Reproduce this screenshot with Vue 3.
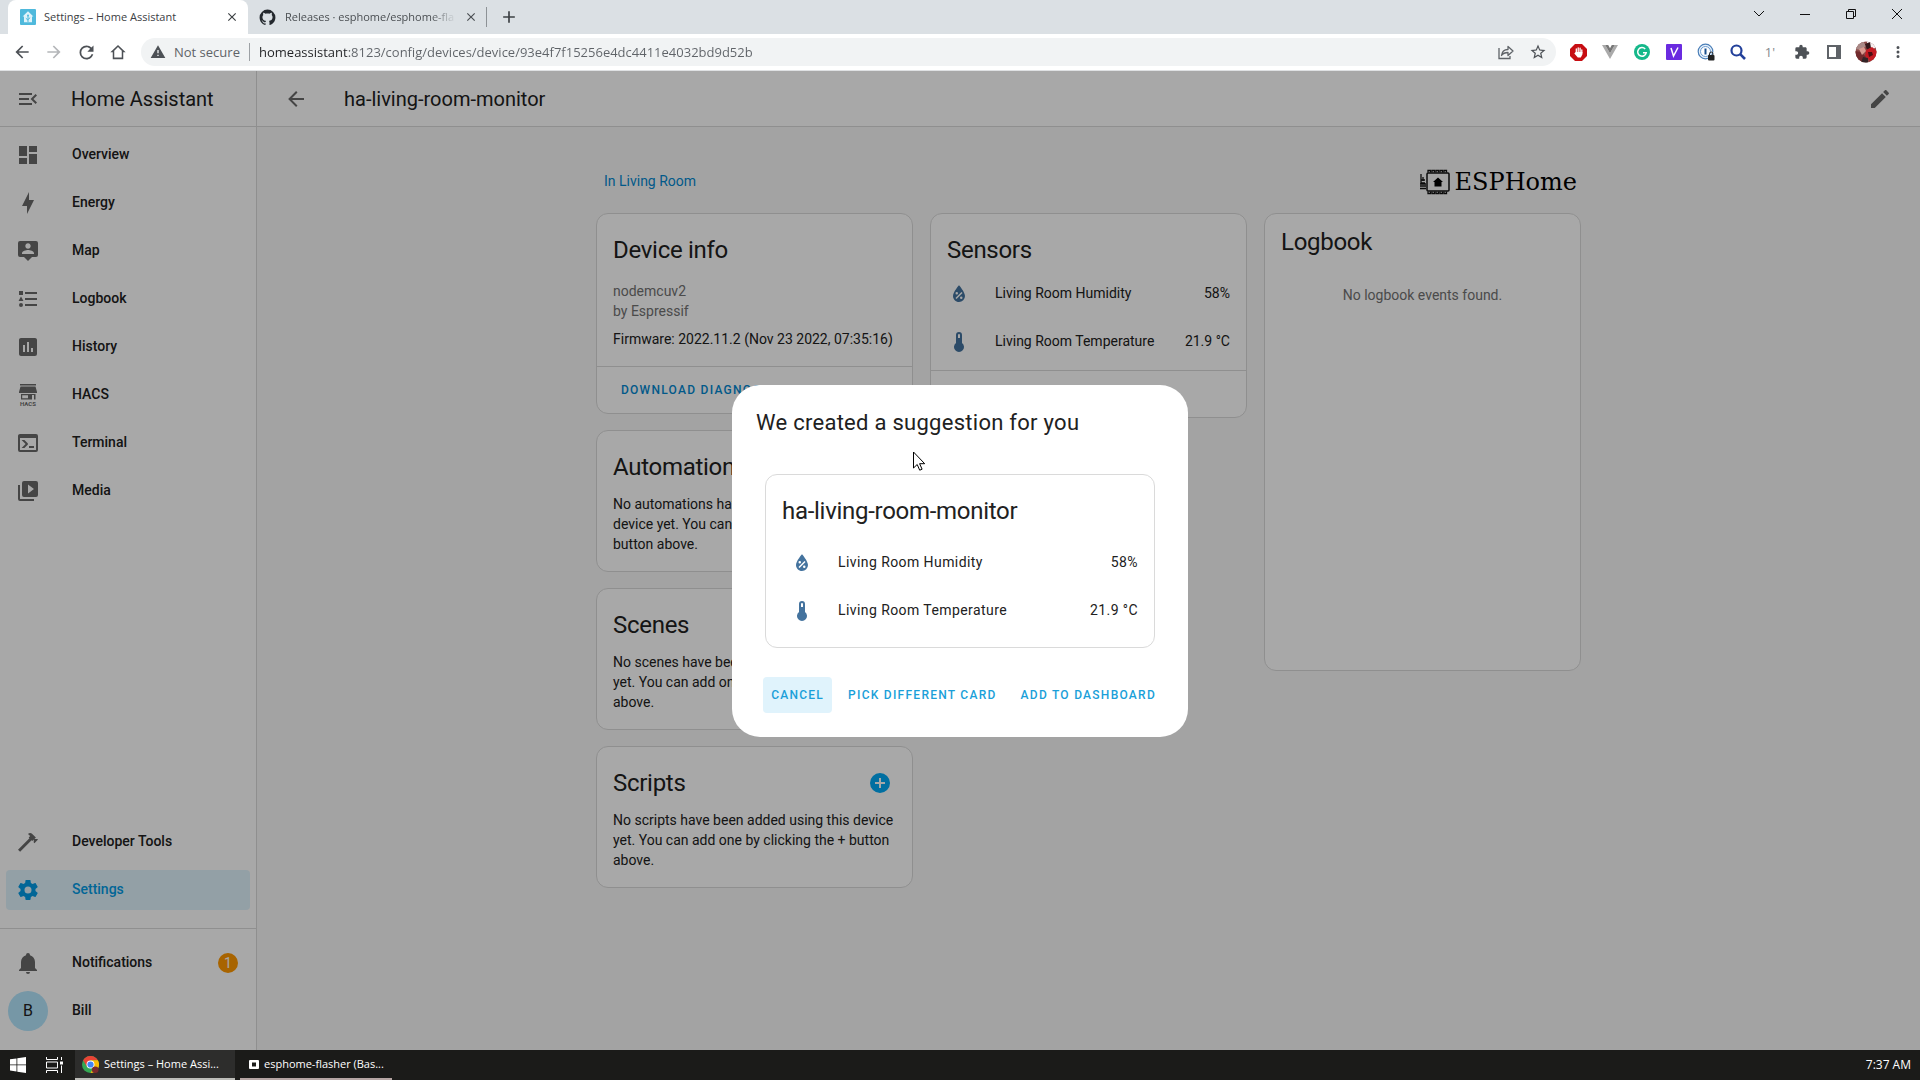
<script setup>
import { h, ref } from 'vue'

const paths = {
  menuOpen: 'M21,15.61L19.59,17L14.58,12L19.59,7L21,8.39L17.44,12L21,15.61M3,6H16V8H3V6M3,13V11H13V13H3M3,18V16H16V18H3Z',
  dashboard: 'M13,3V9H21V3M13,21H21V11H13M3,21H11V15H3M3,13H11V3H3V13Z',
  bolt: 'M11 15H6L13 1V9H18L11 23V15Z',
  map: 'M20,2H4A2,2 0 0,0 2,4V16A2,2 0 0,0 4,18H8L12,22L16,18H20A2,2 0 0,0 22,16V4A2,2 0 0,0 20,2M12,4.3C13.5,4.3 14.7,5.5 14.7,7C14.7,8.5 13.5,9.7 12,9.7C10.5,9.7 9.3,8.5 9.3,7C9.3,5.5 10.5,4.3 12,4.3M18,15H6V14.1C6,12.1 10,11 12,11C14,11 18,12.1 18,14.1V15Z',
  list: 'M5,9.5L7.5,14H2.5L5,9.5M3,4H7V8H3V4M5,20A2,2 0 0,0 7,18A2,2 0 0,0 5,16A2,2 0 0,0 3,18A2,2 0 0,0 5,20M9,5V7H21V5H9M9,19H21V17H9V19M9,13H21V11H9V13Z',
  chart: 'M9 17H7V10H9V17M13 17H11V7H13V17M17 17H15V13H17V17M19 3H5C3.89 3 3 3.89 3 5V19C3 20.1 3.9 21 5 21H19A2 2 0 0 0 21 19V5C21 3.89 20.1 3 19 3Z',
  hacs: 'M4,1H20V2.5H4ZM4.5,3.5H19.5L21,9V10H3V9ZM5,11H19.5V16.5H18V12H16V16.5H5ZM6.2,12.2V15.3H12V12.2Z',
  console: 'M20,19V7H4V19H20M20,3A2,2 0 0,1 22,5V19A2,2 0 0,1 20,21H4A2,2 0 0,1 2,19V5C2,3.89 2.9,3 4,3H20M13,17V15H18V17H13M9.58,13L5.57,9H8.4L11.7,12.3C12.09,12.69 12.09,13.33 11.7,13.72L8.42,17H5.59L9.58,13Z',
  media: 'M4,6H2V20A2,2 0 0,0 4,22H18V20H4V6M20,2H8A2,2 0 0,0 6,4V16A2,2 0 0,0 8,18H20A2,2 0 0,0 22,16V4A2,2 0 0,0 20,2M12,14.5V5.5L18,10L12,14.5Z',
  hammer: 'M2,19.63L13.43,8.2L12.72,7.5L14.14,6.07L12,3.89C13.2,2.7 15.09,2.7 16.27,3.89L19.87,7.5L18.45,8.91H21.29L22,9.62L18.45,13.21L17.74,12.5V9.62L16.27,11.04L15.56,10.33L4.13,21.76L2,19.63Z',
  cog: 'M12,15.5A3.5,3.5 0 0,1 8.5,12A3.5,3.5 0 0,1 12,8.5A3.5,3.5 0 0,1 15.5,12A3.5,3.5 0 0,1 12,15.5M19.43,12.97C19.47,12.65 19.5,12.33 19.5,12C19.5,11.67 19.47,11.34 19.43,11L21.54,9.37C21.73,9.22 21.78,8.95 21.66,8.73L19.66,5.27C19.54,5.05 19.27,4.96 19.05,5.05L16.56,6.05C16.04,5.66 15.5,5.32 14.87,5.07L14.5,2.42C14.46,2.18 14.25,2 14,2H10C9.75,2 9.54,2.18 9.5,2.42L9.13,5.07C8.5,5.32 7.96,5.66 7.44,6.05L4.95,5.05C4.73,4.96 4.46,5.05 4.34,5.27L2.34,8.73C2.21,8.95 2.27,9.22 2.46,9.37L4.57,11C4.53,11.34 4.5,11.67 4.5,12C4.5,12.33 4.53,12.65 4.57,12.97L2.46,14.63C2.27,14.78 2.21,15.05 2.34,15.27L4.34,18.73C4.46,18.95 4.73,19.03 4.95,18.95L7.44,17.94C7.96,18.34 8.5,18.68 9.13,18.93L9.5,21.58C9.54,21.82 9.75,22 10,22H14C14.25,22 14.46,21.82 14.5,21.58L14.87,18.93C15.5,18.67 16.04,18.34 16.56,17.94L19.05,18.95C19.27,19.03 19.54,18.95 19.66,18.73L21.66,15.27C21.78,15.05 21.73,14.78 21.54,14.63L19.43,12.97Z',
  bell: 'M21,19V20H3V19L5,17V11C5,7.9 7.03,5.17 10,4.29C10,4.19 10,4.1 10,4A2,2 0 0,1 12,2A2,2 0 0,1 14,4C14,4.1 14,4.19 14,4.29C16.97,5.17 19,7.9 19,11V17L21,19M14,21A2,2 0 0,1 12,23A2,2 0 0,1 10,21',
  back: 'M20,11V13H8L13.5,18.5L12.08,19.92L4.16,12L12.08,4.08L13.5,5.5L8,11H20Z',
  forward: 'M4,11V13H16L10.5,18.5L11.92,19.92L19.84,12L11.92,4.08L10.5,5.5L16,11H4Z',
  pencil: 'M20.71,7.04C21.1,6.65 21.1,6 20.71,5.63L18.37,3.29C18,2.9 17.35,2.9 16.96,3.29L15.12,5.12L18.87,8.87M3,17.25V21H6.75L17.81,9.93L14.06,6.18L3,17.25Z',
  humidity: 'M12,3.25C12,3.25 6,10 6,14C6,17.32 8.69,20 12,20A6,6 0 0,0 18,14C18,10 12,3.25 12,3.25M14.47,9.97L15.53,11.03L9.53,17.03L8.47,15.97M9.75,10A1.25,1.25 0 0,1 11,11.25A1.25,1.25 0 0,1 9.75,12.5A1.25,1.25 0 0,1 8.5,11.25A1.25,1.25 0 0,1 9.75,10M14.25,14.5A1.25,1.25 0 0,1 15.5,15.75A1.25,1.25 0 0,1 14.25,17A1.25,1.25 0 0,1 13,15.75A1.25,1.25 0 0,1 14.25,14.5Z',
  thermometer: 'M15 13V5A3 3 0 0 0 9 5V13A5 5 0 1 0 15 13M12 4A1 1 0 0 1 13 5V8H11V5A1 1 0 0 1 12 4Z',
  plusCircle: 'M17,13H13V17H11V13H7V11H11V7H13V11H17M12,2A10,10 0 0,0 2,12A10,10 0 0,0 12,22A10,10 0 0,0 22,12A10,10 0 0,0 12,2Z',
  refresh: 'M17.65,6.35C16.2,4.9 14.21,4 12,4A8,8 0 0,0 4,12A8,8 0 0,0 12,20C15.73,20 18.84,17.45 19.73,14H17.65C16.83,16.33 14.61,18 12,18A6,6 0 0,1 6,12A6,6 0 0,1 12,6C13.66,6 15.14,6.69 16.22,7.78L13,11H20V4L17.65,6.35Z',
  home: 'M12,2.5L1.8,12.4H5V21.5H19V12.4H22.2L12,2.5M12,5.4L17,10.2V19.4H7V10.2L12,5.4Z',
  warning: 'M12,2L1,21H23M13,18H11V16H13V18M13,14H11V9H13V14',
  star: 'M12,15.39L8.24,17.66L9.23,13.38L5.91,10.5L10.29,10.13L12,6.09L13.71,10.13L18.09,10.5L14.77,13.38L15.76,17.66M22,9.24L14.81,8.63L12,2L9.19,8.63L2,9.24L7.45,13.97L5.82,21L12,17.27L18.18,21L16.54,13.97L22,9.24Z',
  puzzle: 'M20.5,11H19V7C19,5.89 18.1,5 17,5H13V3.5A2.5,2.5 0 0,0 10.5,1A2.5,2.5 0 0,0 8,3.5V5H4A2,2 0 0,0 2,7V10.8H3.5C5,10.8 6.2,12 6.2,13.5C6.2,15 5,16.2 3.5,16.2H2V20A2,2 0 0,0 4,22H7.8V20.5C7.8,19 9,17.8 10.5,17.8C12,17.8 13.2,19 13.2,20.5V22H17A2,2 0 0,0 19,20V16H20.5A2.5,2.5 0 0,0 23,13.5A2.5,2.5 0 0,0 20.5,11Z',
  github: 'M12,2A10,10 0 0,0 2,12C2,16.42 4.87,20.17 8.84,21.5C9.34,21.58 9.5,21.27 9.5,21C9.5,20.77 9.5,20.14 9.5,19.31C6.73,19.91 6.14,17.97 6.14,17.97C5.68,16.81 5.03,16.5 5.03,16.5C4.12,15.88 5.1,15.9 5.1,15.9C6.1,15.97 6.63,16.93 6.63,16.93C7.5,18.45 8.97,18 9.54,17.76C9.63,17.11 9.89,16.67 10.17,16.42C7.95,16.17 5.62,15.31 5.62,11.5C5.62,10.39 6,9.5 6.65,8.79C6.55,8.54 6.2,7.5 6.75,6.15C6.75,6.15 7.59,5.88 9.5,7.17C10.29,6.95 11.15,6.84 12,6.84C12.85,6.84 13.71,6.95 14.5,7.17C16.41,5.88 17.25,6.15 17.25,6.15C17.8,7.5 17.45,8.54 17.35,8.79C18,9.5 18.38,10.39 18.38,11.5C18.38,15.32 16.04,16.16 13.81,16.41C14.17,16.72 14.5,17.33 14.5,18.26C14.5,19.6 14.5,20.68 14.5,21C14.5,21.27 14.66,21.59 15.17,21.5C19.14,20.16 22,16.42 22,12A10,10 0 0,0 12,2Z',
  close: 'M19,6.41L17.59,5L12,10.59L6.41,5L5,6.41L10.59,12L5,17.59L6.41,19L12,13.41L17.59,19L19,17.59L13.41,12L19,6.41Z',
  plus: 'M19,13H13V19H11V13H5V11H11V5H13V11H19V13Z',
  dots: 'M12,16A2,2 0 0,1 14,18A2,2 0 0,1 12,20A2,2 0 0,1 10,18A2,2 0 0,1 12,16M12,10A2,2 0 0,1 14,12A2,2 0 0,1 12,14A2,2 0 0,1 10,12A2,2 0 0,1 12,10M12,4A2,2 0 0,1 14,6A2,2 0 0,1 12,8A2,2 0 0,1 10,6A2,2 0 0,1 12,4Z',
}

const Icon = (props) =>
  h('svg', { viewBox: '0 0 24 24', width: props.size, height: props.size, 'aria-hidden': 'true' }, [
    h('path', { d: paths[props.name], fill: 'currentColor', 'fill-rule': 'evenodd' }),
    props.name === 'hacs'
      ? h('text', { x: 12, y: 23, 'text-anchor': 'middle', 'font-size': 6, 'font-weight': 700, fill: 'currentColor' }, 'HACS')
      : null,
  ])
Icon.props = { name: String, size: { type: Number, default: 24 } }

const url = ref('homeassistant:8123/config/devices/device/93e4f7f15256e4dc4411e4032bd9d52b')

const panels = [
  { icon: 'dashboard', label: 'Overview' },
  { icon: 'bolt', label: 'Energy' },
  { icon: 'map', label: 'Map' },
  { icon: 'list', label: 'Logbook' },
  { icon: 'chart', label: 'History' },
  { icon: 'hacs', label: 'HACS' },
  { icon: 'console', label: 'Terminal' },
  { icon: 'media', label: 'Media' },
]

const sensors = [
  { icon: 'humidity', label: 'Living Room Humidity', value: '58%' },
  { icon: 'thermometer', label: 'Living Room Temperature', value: '21.9 °C' },
]

const related = [
  { title: 'Automations', text: 'No automations have been added using this device yet. You can add one by clicking the + button above.' },
  { title: 'Scenes', text: 'No scenes have been added using this device yet. You can add one by clicking the + button above.' },
  { title: 'Scripts', text: 'No scripts have been added using this device yet. You can add one by clicking the + button above.' },
]
</script>

<template>
  <div class="screen">
    <header class="tabs">
      <div class="tab active">
        <svg class="favicon" viewBox="0 0 16 16" width="16" height="16" aria-hidden="true">
          <rect width="16" height="16" rx="1" fill="#4fb9dc" />
          <path d="M8 2.300 2.600 7.600h1.400v5.600h8V7.600h1.400z" fill="#dff3fa" />
          <path d="M8 13V7M8 11.200 5.800 9.200M8 10.600l2.200-2" stroke="#4fb9dc" fill="none" />
          <circle cx="8" cy="6.400" r="1" fill="#4fb9dc" />
        </svg>
        <span class="tab-title">Settings – Home Assistant</span>
        <button class="plain" aria-label="Close tab"><Icon name="close" :size="14" /></button>
      </div>
      <div class="tab">
        <Icon class="favicon" name="github" :size="19" />
        <span class="tab-title fade">Releases · esphome/esphome-fla</span>
        <button class="plain" aria-label="Close tab"><Icon name="close" :size="14" /></button>
      </div>
      <button class="plain new-tab" aria-label="New tab"><Icon name="plus" :size="20" /></button>
      <div class="window-buttons">
        <button class="plain" aria-label="Search tabs"><svg width="12" height="12" viewBox="0 0 12 12"><path d="M1 3l5 5 5-5" /></svg></button>
        <button class="plain" aria-label="Minimize"><svg width="12" height="12" viewBox="0 0 12 12"><path d="M1 6.5h10" /></svg></button>
        <button class="plain" aria-label="Restore"><svg width="12" height="12" viewBox="0 0 12 12"><path d="M1.5 3.5h7v7h-7zM3.5 3.5v-2h7v7h-2" /></svg></button>
        <button class="plain" aria-label="Close"><svg width="12" height="12" viewBox="0 0 12 12"><path d="M1 1l10 10M11 1L1 11" /></svg></button>
      </div>
    </header>

    <div class="toolbar">
      <button class="plain tool" aria-label="Back"><Icon name="back" :size="20" /></button>
      <button class="plain tool off" aria-label="Forward"><Icon name="forward" :size="20" /></button>
      <button class="plain tool" aria-label="Reload"><Icon name="refresh" :size="21" /></button>
      <button class="plain tool" aria-label="Home"><Icon name="home" :size="18" /></button>
      <div class="omnibox">
        <Icon class="warning" name="warning" :size="16" />
        <span class="not-secure">Not secure</span>
        <input v-model="url" class="url" type="text" aria-label="Address" />
        <button class="plain tool" aria-label="Share">
          <svg width="18" height="18" viewBox="0 0 18 18" fill="none" stroke="#5f6368" stroke-width="1.3"><path d="M2 5v10.500h11V13" /><path d="M4.500 12.500c.5-4 3-6 6.500-6V3.500l5 4.500-5 4.500V9.500c-3 0-5 .8-6.500 3z" stroke-linejoin="round" /></svg>
        </button>
        <button class="plain tool" aria-label="Bookmark"><Icon name="star" :size="18" /></button>
      </div>
      <div class="extensions">
        <button class="plain tool" aria-label="Ad blocker">
          <svg width="17" height="17" viewBox="0 0 17 17"><path d="M5 0h7l5 5v7l-5 5H5l-5-5V5z" fill="#c70d12" /><path d="M6.300 8.500V5M8.200 8V3.800M10.100 8V4.200M11.800 9V6" stroke="#fff" stroke-width="1.300" stroke-linecap="round" /><path d="M5.700 8h6.700v2.500l-1.600 3H7.800L4.300 9.500l.7-.7z" fill="#fff" /></svg>
        </button>
        <button class="plain tool" aria-label="Vue devtools">
          <svg width="16" height="14" viewBox="0 0 16 14"><path d="M0 0h3.200L8 8.300 12.800 0H16L8 14z" fill="#aaa" /><path d="M3.200 0h3L8 3.200 9.800 0h3L8 8.300z" fill="#777" /></svg>
        </button>
        <button class="plain tool" aria-label="Grammarly">
          <svg width="16" height="16" viewBox="0 0 16 16"><circle cx="8" cy="8" r="8" fill="#15b88a" /><path d="M11.200 5A4.300 4.300 0 1 0 12.200 8.800H9" fill="none" stroke="#fff" stroke-width="1.500" /></svg>
        </button>
        <button class="plain tool" aria-label="Video extension">
          <svg width="16" height="16" viewBox="0 0 16 16"><rect width="16" height="16" rx="1" fill="#6a2be0" /><path d="M5 4l2.500 8L12 3.500" fill="none" stroke="#fff" stroke-width="1.500" /></svg>
        </button>
        <button class="plain tool" aria-label="Password manager">
          <svg width="18" height="18" viewBox="0 0 18 18"><circle cx="8.500" cy="8.500" r="7.300" fill="#e6f0fa" stroke="#4b7fb8" stroke-width="1.200" /><circle cx="8.500" cy="8.500" r="5" fill="#fff" stroke="#6b9bd0" /><path d="M8.500 5.500v6" stroke="#1a4f8c" stroke-width="2" /><rect x="11" y="12" width="6.500" height="5.500" rx="1" fill="#222" /><path d="M12.500 12v-1.300a1.700 1.700 0 0 1 3.400 0V12" fill="none" stroke="#222" /></svg>
        </button>
        <button class="plain tool" aria-label="Search extension">
          <svg width="16" height="16" viewBox="0 0 16 16" fill="none" stroke="#23409a" stroke-width="2.200"><circle cx="6.500" cy="6.500" r="5" /><path d="M10.200 10.200L15 15" stroke-width="2.600" /></svg>
        </button>
        <button class="plain tool one" aria-label="Timer extension">1'</button>
        <button class="plain tool" aria-label="Extensions"><Icon name="puzzle" :size="16" /></button>
        <button class="plain tool" aria-label="Side panel">
          <svg width="14" height="14" viewBox="0 0 14 14"><rect x="1" y="1" width="12" height="12" fill="none" stroke="#5f6368" stroke-width="2" /><path d="M9 1h4v12H9z" fill="#5f6368" /></svg>
        </button>
        <button class="plain tool" aria-label="Profile">
          <svg width="22" height="22" viewBox="0 0 22 22"><defs><clipPath id="face"><circle cx="11" cy="11" r="10.500" /></clipPath></defs><g clip-path="url(#face)"><path d="M0 0h22v22H0z" fill="#8b4a48" /><path d="M0 0h8l3 5-5 4-6-1z" fill="#a98986" /><path d="M12 0h10v6l-6 3-4-4z" fill="#f4eeee" /><path d="M10 3l5-2 1 6-4 2z" fill="#33181a" /><path d="M11 9l6-3 5 4v7l-7 3-5-5z" fill="#c41a22" /><path d="M0 10l6 1 5 5-3 6H0z" fill="#712b2d" /><path d="M4 8l5-2 2 4-4 4z" fill="#d99b90" /><path d="M13 11h4l1 3-4 2z" fill="#4b0e12" /><path d="M8 16l5 1v5H6z" fill="#322426" /></g></svg>
        </button>
        <button class="plain tool" aria-label="Menu"><Icon name="dots" :size="18" /></button>
      </div>
    </div>

    <div class="app">
      <aside class="sidebar">
        <div class="brand">
          <button class="plain brand-menu" aria-label="Collapse sidebar"><Icon name="menuOpen" /></button>
          <span>Home Assistant</span>
        </div>
        <nav class="nav">
          <a v-for="p in panels" :key="p.label" class="item" href="#"><Icon :name="p.icon" /><span class="label">{{ p.label }}</span></a>
          <span class="spacer"></span>
          <a class="item" href="#"><Icon name="hammer" /><span class="label">Developer Tools</span></a>
          <a class="item selected" href="#"><Icon name="cog" /><span class="label">Settings</span></a>
        </nav>
        <div class="user">
          <a class="item" href="#"><Icon name="bell" /><span class="label">Notifications</span><span class="badge">1</span></a>
          <a class="item profile" href="#"><span class="avatar">B</span><span class="label">Bill</span></a>
        </div>
      </aside>

      <main class="main">
        <div class="page-header">
          <button class="plain" aria-label="Go back"><Icon name="back" /></button>
          <h1>ha-living-room-monitor</h1>
          <button class="plain" aria-label="Edit"><Icon name="pencil" /></button>
        </div>

        <div class="content">
          <div class="device-head">
            <a href="#">In Living Room</a>
            <div class="esphome">
              <svg width="32" height="26" viewBox="0 0 32 26" fill="none" stroke="#111" aria-hidden="true">
                <rect x="8" y="4" width="22" height="18" rx="1" stroke-width="1.500" />
                <path d="M9 3.500V1.500h2.500v2M13 3.500v-2h2.500v2M17 3.500v-2h2.500v2M21 3.500v-2h2.500v2M25 3.500v-2h2.500v2M9 22.500v2h2.500v-2M13 22.500v2h2.500v-2M17 22.500v2h2.500v-2M21 22.500v2h2.500v-2M25 22.500v2h2.500v-2" stroke-width="1.300" />
                <path d="M2 5v6h4M2 11v3h4M1 15h6M1 17h6M1 19.500h6M4 8v4" stroke-width="1.300" />
                <path d="M19 8.500l5 4.500h-1.500v4.500h-7V13H14z" fill="#000" stroke="none" />
              </svg>
              <span>ESPHome</span>
            </div>
          </div>

          <div class="columns">
            <div class="column">
              <section class="card">
                <h2>Device info</h2>
                <div class="info">
                  <p class="muted">nodemcuv2<br />by Espressif</p>
                  <p>Firmware: 2022.11.2 (Nov 23 2022, 07:35:16)</p>
                </div>
                <div class="card-actions"><button class="action">Download diagnostics</button></div>
              </section>
              <section v-for="r in related" :key="r.title" class="card">
                <div class="card-top">
                  <h2>{{ r.title }}</h2>
                  <button class="plain add" :aria-label="'Add to ' + r.title"><Icon name="plusCircle" /></button>
                </div>
                <p class="related">{{ r.text }}</p>
              </section>
            </div>
            <div class="column">
              <section class="card">
                <h2>Sensors</h2>
                <div class="entities">
                  <div v-for="s in sensors" :key="s.label" class="entity">
                    <Icon :name="s.icon" /><span class="label">{{ s.label }}</span><span class="label value">{{ s.value }}</span>
                  </div>
                </div>
                <div class="card-actions"><button class="action">Add to dashboard</button></div>
              </section>
            </div>
            <div class="column">
              <section class="card logbook">
                <h2>Logbook</h2>
                <p>No logbook events found.</p>
              </section>
            </div>
          </div>
        </div>
      </main>

      <div class="scrim">
        <div class="dialog" role="dialog" aria-modal="true" aria-labelledby="dialog-title">
          <h2 id="dialog-title">We created a suggestion for you</h2>
          <section class="card preview">
            <h2>ha-living-room-monitor</h2>
            <div class="entities">
              <div v-for="s in sensors" :key="s.label" class="entity">
                <Icon :name="s.icon" /><span class="label">{{ s.label }}</span><span class="label value">{{ s.value }}</span>
              </div>
            </div>
          </section>
          <div class="dialog-actions">
            <button class="action focused">Cancel</button>
            <button class="action">Pick different card</button>
            <button class="action">Add to dashboard</button>
          </div>
          <svg class="pointer" width="13" height="20" viewBox="0 0 13 20" aria-hidden="true">
            <path d="M.5 1v16l3.700-3.500 2.500 5.700 2.400-1-2.500-5.500h5.100z" fill="#fff" stroke="#000" />
          </svg>
        </div>
      </div>
    </div>

    <footer class="taskbar">
      <button class="plain start" aria-label="Start">
        <svg width="16" height="16" viewBox="0 0 16 16" fill="#fff"><path d="M0 2.300l6.500-.9v6.100H0zM7.300 1.300L16 0v7.500H7.300zM0 8.300h6.500v6.200L0 13.600zM7.300 8.300H16V16l-8.700-1.300z" /></svg>
      </button>
      <button class="plain view" aria-label="Task view">
        <svg width="17" height="16" viewBox="0 0 17 16" fill="none" stroke="#fff"><path d="M.5 0v2.500h11V0M.5 16v-2.500h11V16M.5 5h11v6H.5zM15.500 0v3M15.500 8.500V16" /><path d="M14 4.500h3v3h-3z" fill="#fff" stroke="none" /></svg>
      </button>
      <button class="plain task current">
        <svg width="17" height="17" viewBox="0 0 18 18" aria-hidden="true">
          <circle cx="9" cy="9" r="9" fill="#34a853" />
          <path d="M1.200 4.500A9 9 0 0 1 16.800 4.500H9L5.100 11.200z" fill="#ea4335" />
          <path d="M16.800 4.500A9 9 0 0 1 9 18l3.900-6.800L9 4.500z" fill="#fbbc05" />
          <circle cx="9" cy="9" r="4.200" fill="#fff" /><circle cx="9" cy="9" r="3.300" fill="#4285f4" />
          <circle cx="14" cy="14.500" r="3.500" fill="#7a2a2c" />
        </svg>
        <span>Settings – Home Assi...</span>
      </button>
      <button class="plain task">
        <svg width="10" height="9" viewBox="0 0 10 9" aria-hidden="true"><rect width="10" height="9" rx="1" fill="#fff" /><path d="M3 2.500h4v4H3z" fill="#1c1c1a" /></svg>
        <span>esphome-flasher (Bas...</span>
      </button>
      <time class="clock">7:37 AM</time>
    </footer>
  </div>
</template>

<style>
body {
  margin: 0;
}
</style>

<style scoped>
.screen {
  display: flex;
  flex-direction: column;
  min-height: 100vh;
  font-family: Roboto, "Noto Sans", sans-serif;
  font-size: 14px;
  line-height: 20px;
  color: #212121;
}
.screen *,
.screen {
  box-sizing: border-box;
}
h1,
h2,
p {
  margin: 0;
  font-weight: 400;
}
svg {
  display: block;
  flex: none;
}
a {
  color: inherit;
  text-decoration: none;
}
.plain {
  display: flex;
  align-items: center;
  justify-content: center;
  padding: 0;
  border: 0;
  background: none;
  color: inherit;
  font: inherit;
}
.label {
  padding-bottom: 2px;
}

/* browser */
.tabs {
  display: flex;
  height: 34px;
  padding-left: 8px;
  background: #dbe0e4;
  color: #3c4043;
  font: 11px/34px "Open Sans", sans-serif;
}
.tab {
  display: flex;
  align-items: center;
  width: 240px;
  padding: 0 9px 0 12px;
  gap: 8px;
}
.tab + .tab {
  width: 238px;
  padding: 0 8px 0 10px;
  color: #4a4e52;
}
.tab.active {
  background: #fff;
  border-radius: 8px 8px 0 0;
}
.favicon {
  color: #24292e;
}
.tab-title {
  flex: 1;
  white-space: nowrap;
}
.fade {
  mask-image: linear-gradient(90deg, #000 85%, transparent);
}
.new-tab {
  align-self: center;
  height: 20px;
  width: 44px;
  border-left: 1px solid #8d9296;
}
.window-buttons {
  display: flex;
  margin-left: auto;
}
.window-buttons button {
  width: 46px;
  height: 28px;
}
.window-buttons path {
  fill: none;
  stroke: #111;
}
.toolbar {
  display: flex;
  align-items: center;
  height: 37px;
  padding: 0 6px;
  background: #fff;
  border-bottom: 1px solid #dfe1e3;
  color: #4d5156;
  font: 13px/28px "Open Sans", sans-serif;
}
.tool {
  width: 32px;
  height: 28px;
}
.off {
  color: #b4b6b9;
}
.omnibox {
  display: flex;
  align-items: center;
  flex: 1;
  height: 28px;
  margin-left: 7px;
  padding: 0 2px 0 9px;
  border-radius: 14px;
  background: #f1f3f4;
}
.not-secure {
  width: 76px;
  margin-left: 8px;
  line-height: 18px;
  color: #5f6368;
  border-right: 1px solid #9da1a5;
}
.url {
  flex: 1;
  min-width: 0;
  height: 28px;
  margin: 0;
  padding: 0 0 0 9px;
  border: 0;
  outline: 0;
  font: 13px/28px "Open Sans", sans-serif;
  color: transparent;
  background: linear-gradient(90deg, #202124 98px, #5f6368 98px);
  background-clip: text;
}
.extensions {
  display: flex;
  padding-left: 6px;
}
.one {
  color: #85888c;
}

/* application */
.app {
  position: relative;
  display: flex;
  flex: 1;
}
.sidebar {
  display: flex;
  flex-direction: column;
  width: 257px;
  flex: none;
  border-right: 1px solid #dadada;
}
.brand {
  display: flex;
  align-items: center;
  height: 56px;
  gap: 31px;
  padding-left: 16px;
  border-bottom: 1px solid #dadada;
  font-size: 20px;
}
.brand-menu,
.item svg {
  color: #6a6a6a;
}
.nav {
  display: flex;
  flex: 1;
  flex-direction: column;
  gap: 8px;
  padding: 8px 6px 18px;
}
.spacer {
  flex: 1;
}
.item {
  display: flex;
  align-items: center;
  height: 40px;
  gap: 32px;
  padding: 0 10px;
  border-radius: 4px;
  font-weight: 500;
}
.item.selected,
.item.selected svg {
  color: #039be5;
}
.item.selected {
  background: #e0f3fc;
}
.user {
  display: flex;
  flex-direction: column;
  gap: 8px;
  padding: 14px 6px 19px;
  border-top: 1px solid #dadada;
}
.badge {
  width: 20px;
  height: 20px;
  margin-left: auto;
  margin-right: 2px;
  border-radius: 50%;
  background: #ff9800;
  color: #fff;
  font-weight: 400;
  text-align: center;
}
.profile {
  gap: 24px;
  padding: 0 2px;
}
.avatar {
  width: 40px;
  height: 40px;
  border-radius: 50%;
  background: #b3e5fc;
  font-size: 16px;
  font-weight: 400;
  line-height: 40px;
  text-align: center;
}
.main {
  flex: 1;
  min-width: 0;
  background: #f8f8f8;
}
.page-header {
  display: flex;
  align-items: center;
  height: 56px;
  gap: 36px;
  padding: 0 28px 0 27px;
  background: #fff;
  border-bottom: 1px solid #dadada;
}
.page-header h1 {
  flex: 1;
  font-size: 20px;
}
.page-header .plain {
  color: #6a6a6a;
}
.content {
  max-width: 985px;
  margin: 0 auto;
  padding: 34px 0;
}
.device-head {
  display: flex;
  align-items: center;
  justify-content: space-between;
  height: 40px;
  margin-bottom: 12px;
  padding: 0 4px 0 8px;
}
.device-head a {
  color: #0288d1;
}
.esphome {
  display: flex;
  align-items: center;
  gap: 4px;
  padding-top: 2px;
  color: #000;
  font: 24px/26px "DejaVu Serif", serif;
}
.columns {
  display: grid;
  grid-template-columns: repeat(3, minmax(0, 1fr));
  gap: 17px;
}
.column {
  display: flex;
  flex-direction: column;
  gap: 16px;
}
.card {
  border: 1px solid #dadada;
  border-radius: 12px;
  background: #fff;
}
.card h2 {
  padding: 12px 16px 0;
  font-size: 24px;
  line-height: 48px;
  letter-spacing: -0.012em;
}
.info {
  padding: 7px 16px 17px;
  white-space: nowrap;
}
.muted {
  margin-bottom: 8px;
  color: #727272;
}
.card-actions {
  padding: 5px 16px;
  border-top: 1px solid #dadada;
}
.action {
  height: 36px;
  padding: 0 8px;
  border: 0;
  border-radius: 4px;
  background: none;
  color: #0288d1;
  font: 500 12px/36px Roboto, sans-serif;
  letter-spacing: 0.105em;
  text-transform: uppercase;
}
.card-top {
  display: flex;
  justify-content: space-between;
}
.add {
  margin: 12px 20px 0 0;
  color: #03a9f4;
}
.related {
  padding: 3px 16px 17px;
}
.entities {
  display: flex;
  flex-direction: column;
  gap: 8px;
  padding: 0 16px 8px;
}
.entity {
  display: flex;
  align-items: center;
  height: 40px;
  gap: 24px;
}
.entity svg {
  color: #44739e;
}
.value {
  margin-left: auto;
}
.logbook {
  height: 458px;
}
.logbook h2 {
  padding-top: 4px;
}
.logbook p {
  padding-top: 19px;
  color: #727272;
  text-align: center;
}

/* suggestion dialog */
.scrim {
  position: absolute;
  inset: 0;
  display: flex;
  align-items: center;
  justify-content: center;
  background: rgba(0, 0, 0, 0.34);
}
.dialog {
  position: relative;
  width: 456px;
  padding: 21px 24px 24px;
  border-radius: 28px;
  background: #fff;
}
.dialog > h2 {
  font-size: 22px;
  line-height: 34px;
  letter-spacing: 0.0125em;
}
.preview {
  margin: 34px 9px 29px;
}
.preview .entities {
  padding: 8px 16px 16px;
  letter-spacing: 0.03em;
}
.preview .entity {
  padding-left: 8px;
}
.dialog-actions {
  display: flex;
  justify-content: flex-end;
  gap: 8px;
}
.dialog-actions .action {
  color: #1a9fd9;
}
.dialog-actions .focused {
  background: #e0f3fc;
}
.pointer {
  position: absolute;
  left: 181px;
  top: 66px;
}

/* desktop */
.taskbar {
  display: flex;
  height: 30px;
  background: #1b1b19;
  color: #fff;
  font: 12px/30px "Open Sans", sans-serif;
}
.start,
.view {
  width: 36px;
}
.view {
  margin-right: 3px;
}
.task {
  justify-content: flex-start;
  width: 160px;
  gap: 5px;
  padding: 0 7px;
  border-bottom: 2px solid #bcbcb8;
  font-size: 11px;
  line-height: 28px;
  white-space: nowrap;
}
.task + .task {
  width: 152px;
  margin-left: 5px;
  padding-left: 9px;
  border-color: #b5a5a3;
}
.task.current {
  margin-left: 0;
  background: #2d2d2c;
}
.clock {
  margin-left: auto;
  padding-right: 9px;
}
</style>
